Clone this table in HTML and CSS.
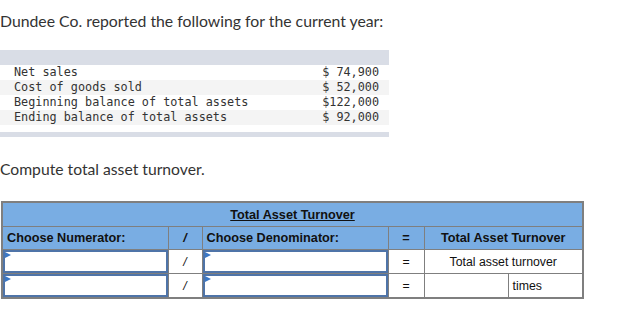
FILE: index.html
```html
<!DOCTYPE html>
<html>
<head>
<meta charset="utf-8">
<link rel="stylesheet" href="styles.css">
</head>
<body>
<p class="intro">Dundee Co. reported the following for the current year:</p>
<div class="data">
  <div class="bar-top"></div>
  <div class="row"><span>Net sales</span><span>$ 74,900</span></div>
  <div class="row alt"><span>Cost of goods sold</span><span>$ 52,000</span></div>
  <div class="row"><span>Beginning balance of total assets</span><span>$122,000</span></div>
  <div class="row alt"><span>Ending balance of total assets</span><span>$ 92,000</span></div>
  <div class="bar-bottom"></div>
</div>
<p class="task">Compute total asset turnover.</p>
<table class="calc">
  <colgroup>
    <col class="c1"><col class="c2"><col class="c3"><col class="c4"><col class="c5"><col class="c6">
  </colgroup>
  <tr class="head h1"><td colspan="6"><u>Total Asset Turnover</u></td></tr>
  <tr class="head h2">
    <td class="left">Choose Numerator:</td>
    <td class="center"><i>/</i></td>
    <td class="left">Choose Denominator:</td>
    <td class="center">=</td>
    <td class="center" colspan="2">Total Asset Turnover</td>
  </tr>
  <tr class="body">
    <td class="inp"><div class="field"></div></td>
    <td class="center"><i>/</i></td>
    <td class="inp"><div class="field"></div></td>
    <td class="center">=</td>
    <td class="center" colspan="2">Total asset turnover</td>
  </tr>
  <tr class="body">
    <td class="inp"><div class="field"></div></td>
    <td class="center"><i>/</i></td>
    <td class="inp"><div class="field"></div></td>
    <td class="center">=</td>
    <td></td>
    <td class="left">times</td>
  </tr>
</table>
</body>
</html>
```
FILE: styles.css
```css
html, body { margin: 0; padding: 0; background: #fff; }
body { font-family: Lato, "Open Sans", sans-serif; color: #333; }
.intro { margin: 12px 0 0 0; font-size: 15.8px; line-height: 18px; }
.data { margin-top: 20px; width: 389px; font-family: "DejaVu Sans Mono", monospace; font-size: 11.8px; color: #333; }
.bar-top { height: 15px; background: #d9dde6; }
.bar-bottom { height: 5px; background: #d9dde6; margin-top: 7px; }
.row { height: 15px; line-height: 15px; display: flex; justify-content: space-between; padding: 0 10px 0 14px; background: #fff; }
.row.alt { background: #f4f4f4; }
.task { margin: 23px 0 0 0; font-size: 15.7px; line-height: 18px; }
.calc { margin: 23px 0 0 1px; border-collapse: collapse; table-layout: fixed; width: 581px; font-family: "Liberation Sans", Arial, sans-serif; font-size: 12.7px; color: #111; border: 2px solid #7f7f7f; }
.c1 { width: 166px; } .c2 { width: 34px; } .c3 { width: 186px; } .c4 { width: 36px; } .c5 { width: 84px; } .c6 { width: 75px; }
.calc td { border: 1px solid #7f7f7f; padding: 0 4px; text-align: center; }
.head td { background: #79ade3; font-weight: bold; }
.h1 td { height: 23px; }
.h2 td { height: 22px; }
.body td { height: 23px; font-size: 12.3px; }
.calc td.left { text-align: left; }
.calc td.inp { padding: 0; position: relative; }
.field { box-sizing: border-box; height: 23px; border: 2px solid #4f74a8; background: #fff; position: relative; }
.field::before { content: ""; position: absolute; left: 0; top: 0; border-left: 6px solid #3b78c6; border-top: 3px solid transparent; border-bottom: 3px solid transparent; }
```
